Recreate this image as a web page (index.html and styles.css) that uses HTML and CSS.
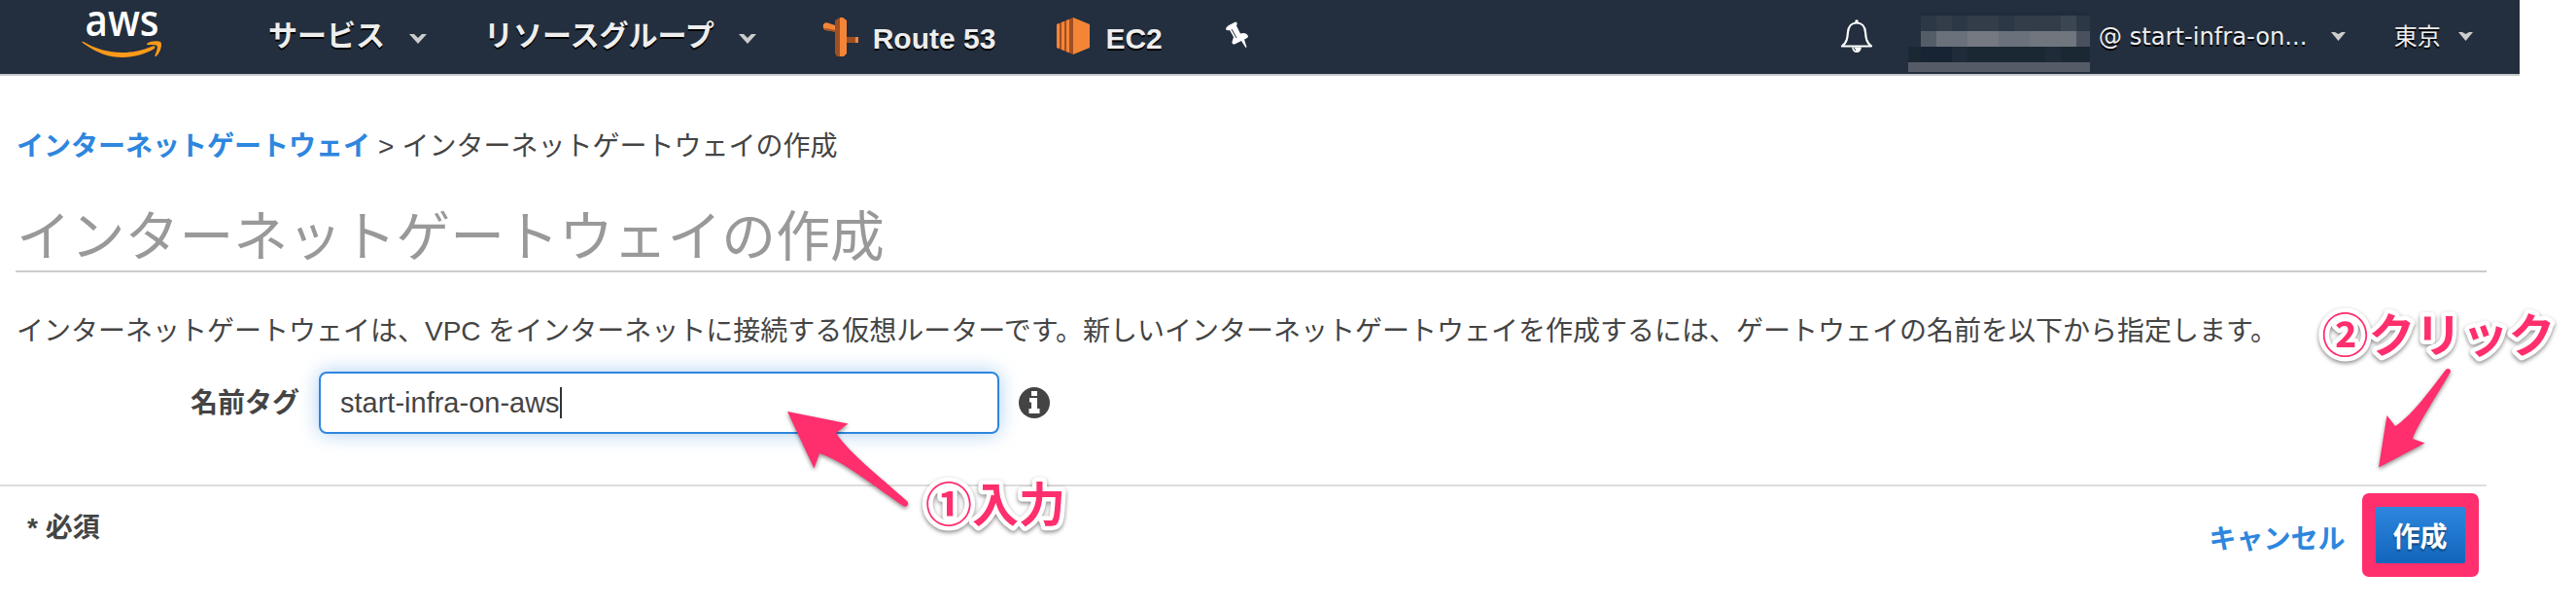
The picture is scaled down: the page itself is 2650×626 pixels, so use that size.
FILE: index.html
```html
<!DOCTYPE html>
<html lang="ja">
<head>
<meta charset="utf-8">
<title>インターネットゲートウェイの作成</title>
<link rel="stylesheet" href="styles.css">
</head>
<body>
<header class="nav">
  <svg class="logo" width="84" height="54" viewBox="0 0 84 54">
    <text x="3.500" y="28" class="logo-text" textLength="76" lengthAdjust="spacingAndGlyphs">aws</text>
    <path fill="#ff9a1a" d="M1 35C16 46 29 50 42 50 54 50 66 46 74 41.500 76.500 40 75.500 37.500 73 38.500 62 43 52 45 42 45 27 45 14 41 2 34 .5 33.500 0 34.200 1 35Z"/>
    <path fill="#ff9a1a" d="M67.500 35.500C71 33 78 32.500 81 34 83.500 36 81 45 77 48.500 76 49.500 75 49 75.500 47.800 77 44 78.500 39.500 77.500 38 76 36.500 71 37 68.500 37.200 67 37.200 66.500 36.300 67.500 35.500Z"/>
  </svg>
  <nav class="menu">
    <a class="menu-item">サービス<svg class="caret" width="18" height="10" viewBox="0 0 18 10"><path d="M0 0H5L9 4 13 0H18L9 10Z"/></svg></a>
    <a class="menu-item">リソースグループ<svg class="caret" width="18" height="10" viewBox="0 0 18 10"><path d="M0 0H5L9 4 13 0H18L9 10Z"/></svg></a>
  </nav>
  <div class="shortcuts">
    <a class="shortcut route">
      <svg width="38" height="42" viewBox="0 0 38 42">
        <path fill="#f58536" d="M1 8Q3 5 7 7L16 10V16L3 14Q0 12 1 8Z"/>
        <path fill="#9d5025" d="M1 13L13 16V14L3 12Z"/>
        <path fill="#9d5025" d="M22 21H36V27H22Z"/><path fill="#f58536" d="M34 21H37V27H34Z"/>
        <path fill="#9d5025" d="M13 4L18 1V41L15 41 13 38Z"/>
        <path fill="#f58536" d="M18 1H21L25 4V38L22 41H18Z"/>
      </svg>Route 53</a>
    <a class="shortcut ec2">
      <svg width="36" height="40" viewBox="0 0 36 40">
        <path fill="#9d5025" d="M1 8L18 1V39L1 32Z"/>
        <path fill="#f58536" d="M18 1L35 8V32L18 39ZM1 8L4 7V33L1 32ZM6 6L9 5V35L6 34ZM11 4L14 3V37L11 36Z"/>
      </svg>EC2</a>
    <svg class="pin" width="26" height="28" viewBox="0 0 26 28">
      <path fill="#fff" d="M1 8Q1 6 4 4L11 .5Q13 .5 12.500 3L12 4.500 16 12.500Q22 11 24 15 24 17 20 18.500L22.500 26.500 21.500 27 17 20 10 23.500Q7 24 7.500 21L9 16 5 9Q2 10 1 8Z"/>
      <path stroke="#232f3e" stroke-width="1" d="M7 8L12 17"/>
    </svg>
  </div>
  <svg class="bell" width="34" height="36" viewBox="0 0 34 36">
    <path fill="none" stroke="#fff" stroke-width="2.200" stroke-linejoin="round" d="M2 28.500H32C27 25 26.500 20 26 14 25.500 8 22 4.500 17 4.500S8.500 8 8 14C7.500 20 7 25 2 28.500Z"/>
    <circle cx="17" cy="3" r="1.800" fill="#fff"/>
    <path fill="#fff" d="M12 29.500H22Q21 35 17 35T12 29.500Z"/>
    <path stroke="#232f3e" d="M14 30L16 33"/>
  </svg>
  <svg class="mask" width="187" height="62" viewBox="0 0 187 62" shape-rendering="crispEdges">
    <path fill="#202c3c" d="M13 0H187V4H13Z"/>
    <path fill="#2c3846" d="M13 4H187V20H13Z"/>
    <path fill="#323d49" d="M29 4H45V20H29ZM61 4H93V20H61ZM109 4H157V20H109Z"/>
    <path fill="#3c4653" d="M157 4H173V20H157Z"/>
    <path fill="#6a717a" d="M13 20H187V36H13Z"/>
    <path fill="#545c67" d="M13 20H29V36H13Z"/>
    <path fill="#757982" d="M61 20H93V36H61Z"/>
    <path fill="#70767e" d="M125 20H173V36H125Z"/>
    <path fill="#4a505d" d="M173 20H187V36H173Z"/>
    <path fill="#1a2833" d="M0 36H187V52H0Z"/>
    <path fill="#172434" d="M13 36H45V52H13Z"/>
    <path fill="#1f2b38" d="M45 36H61V52H45ZM141 36H157V52H141Z"/>
    <path fill="#555c67" d="M0 52H187V62H0Z"/>
  </svg>
  <a class="account">@ start-infra-on...</a>
  <svg class="caret caret-account" width="15" height="9" viewBox="0 0 15 9"><path d="M0 0H4L7.500 2 11 0H15L7.500 9Z"/></svg>
  <a class="region">東京</a>
  <svg class="caret caret-region" width="15" height="9" viewBox="0 0 15 9"><path d="M0 0H4L7.500 2 11 0H15L7.500 9Z"/></svg>
</header>
<main class="content">
  <div class="breadcrumb"><a class="link">インターネットゲートウェイ</a><span class="sep">&gt;</span><span>インターネットゲートウェイの作成</span></div>
  <h1 class="title">インターネットゲートウェイの作成</h1>
  <p class="lead">インターネットゲートウェイは、VPC をインターネットに接続する仮想ルーターです。新しいインターネットゲートウェイを作成するには、ゲートウェイの名前を以下から指定します。</p>
  <div class="field">
    <label class="label">名前タグ</label>
    <div class="input"><span>start-infra-on-aws</span><span class="cursor"></span></div>
    <svg class="info" width="32" height="32" viewBox="0 0 32 32">
      <circle cx="16" cy="16" r="16" fill="#444"/>
      <path fill="#fff" d="M13 4H19V9H13ZM11 11H19V22H21.500V27H10.500V22H13V15.500H11Z"/>
    </svg>
  </div>
</main>
<footer class="footer">
  <span class="required">* 必須</span>
  <div class="actions">
    <a class="link cancel">キャンセル</a>
    <div class="highlight"><button class="create">作成</button></div>
  </div>
</footer>
<svg class="notes" width="2650" height="626" viewBox="0 0 2650 626">
  <g class="arrow">
    <path d="M810 423L872.500 435.500 860 445C874 466 904 489 933 515 936 518 933 522 929 520 900 500 866 473 843 466L837.500 481.500Z"/>
    <path d="M2447 480.500L2494.500 455.500 2482 451C2486 438 2506 408 2521 382 2521 379 2518 378 2516 380 2498 404 2479 429 2464 438L2455.500 427Z"/>
  </g>
  <text class="note" x="952" y="535.500">①入力</text>
  <text class="note" x="2388.500" y="362">②クリック</text>
</svg>
</body>
</html>
```
FILE: styles.css
```css
* { box-sizing: border-box; }
body {
  position: relative;
  margin: 0;
  width: 2650px;
  height: 626px;
  overflow: hidden;
  background: #fff;
  color: #444;
  font: 28px/40px "Liberation Sans", "Noto Sans CJK JP", sans-serif;
  white-space: nowrap;
}
.nav {
  display: flex;
  align-items: flex-start;
  width: 2592px;
  height: 78px;
  background: #232f3e;
  border-bottom: 2px solid #c8c9cd;
  color: #eee;
  text-shadow: 0 2px 0 #000;
}
.logo { margin: 9px 0 0 84px; flex: none; overflow: visible; }
.logo-text { font: 600 45px "Open Sans", sans-serif; fill: #fff; text-shadow: none; }
.menu { display: flex; margin-left: 108px; gap: 59px; }
.menu-item {
  display: flex;
  align-items: center;
  height: 76px;
  padding-bottom: 2px;
  font-size: 30px;
  font-weight: 700;
}
.menu-item .caret { margin: 5px 0 0 25px; }
.caret { fill: #ccc; flex: none; }
.shortcuts { display: flex; align-items: flex-start; margin-left: 68px; }
.shortcut { display: flex; align-items: flex-start; font-size: 30px; font-weight: 700; line-height: 80px; }
.shortcut svg { margin-top: 17px; }
.route svg { margin-right: 14px; }
.ec2 { margin-left: 62px; }
.ec2 svg { margin-right: 15px; }
.pin { margin: 22px 0 0 64px; }
.bell { margin: 19px 0 0 607px; flex: none; }
.mask { margin: 12px 0 0 36px; flex: none; }
.account, .region { font: 24px/76px "DejaVu Sans", "Noto Sans CJK JP", sans-serif; }
.account { width: 214px; margin-left: 9px; font-size: 24.2px; }
.region { width: 48px; margin-left: 50px; }
.caret-account { margin: 33px 0 0 25px; }
.caret-region { margin: 33px 0 0 18px; }
.content { width: 2558px; height: 420px; padding: 53px 0 0 16px; }
.breadcrumb { display: flex; height: 40px; padding-left: 1px; }
.link { color: #2e86de; font-weight: 700; }
.sep { margin: 0 8px 0 8px; }
.title {
  height: 109px;
  margin: 0 0 41px;
  padding: 33px 0 0 1px;
  border-bottom: 2px solid #ccc;
  color: #999;
  font-size: 55.8px;
  font-weight: 400;
  line-height: 80px;
}
.lead { height: 40px; margin: 0 0 21px; padding-left: 1px; }
.field { display: flex; align-items: center; height: 64px; padding-left: 180px; }
.label { width: 112px; margin-right: 20px; padding-top: 1px; font-weight: 700; }
.input {
  display: flex;
  align-items: center;
  width: 700px;
  height: 64px;
  padding-left: 20px;
  border: 2px solid #2e86de;
  border-radius: 8px;
  box-shadow: 0 0 20px rgba(46, 134, 222, .4);
  font-size: 29px;
}
.cursor { width: 2px; height: 32px; background: #333; }
.info { margin-left: 20px; }
.footer {
  display: flex;
  justify-content: space-between;
  width: 2558px;
  height: 128px;
  border-top: 2px solid #ddd;
}
.required { margin: 23px 0 0 28px; font-weight: 700; }
.actions { display: flex; }
.cancel { margin: 35px 17px 0 0; }
.highlight {
  width: 120px;
  height: 86px;
  margin: 7px 8.5px 0 0;
  padding: 14px;
  border-radius: 7px;
  background: #ff2e6c;
}
.create {
  display: block;
  width: 92px;
  height: 58px;
  padding: 5px 0 0;
  border: 0;
  border-radius: 2px;
  background: linear-gradient(#2e86de, #1166bb);
  color: #fff;
  font: 700 28px/53px "Liberation Sans", "Noto Sans CJK JP", sans-serif;
  text-shadow: 0 2px 2px rgba(0, 0, 0, .4);
}
.notes { position: absolute; left: 0; top: 0; }
.arrow { fill: #ff2e6c; filter: drop-shadow(0 2px 2px rgba(0, 0, 0, .45)); }
.note {
  font: 700 48px "Noto Sans CJK JP", sans-serif;
  fill: #ff2e6c;
  stroke: #fff;
  stroke-width: 9px;
  stroke-linejoin: round;
  paint-order: stroke;
  filter: drop-shadow(0 2px 2px rgba(0, 0, 0, .45));
}
```
